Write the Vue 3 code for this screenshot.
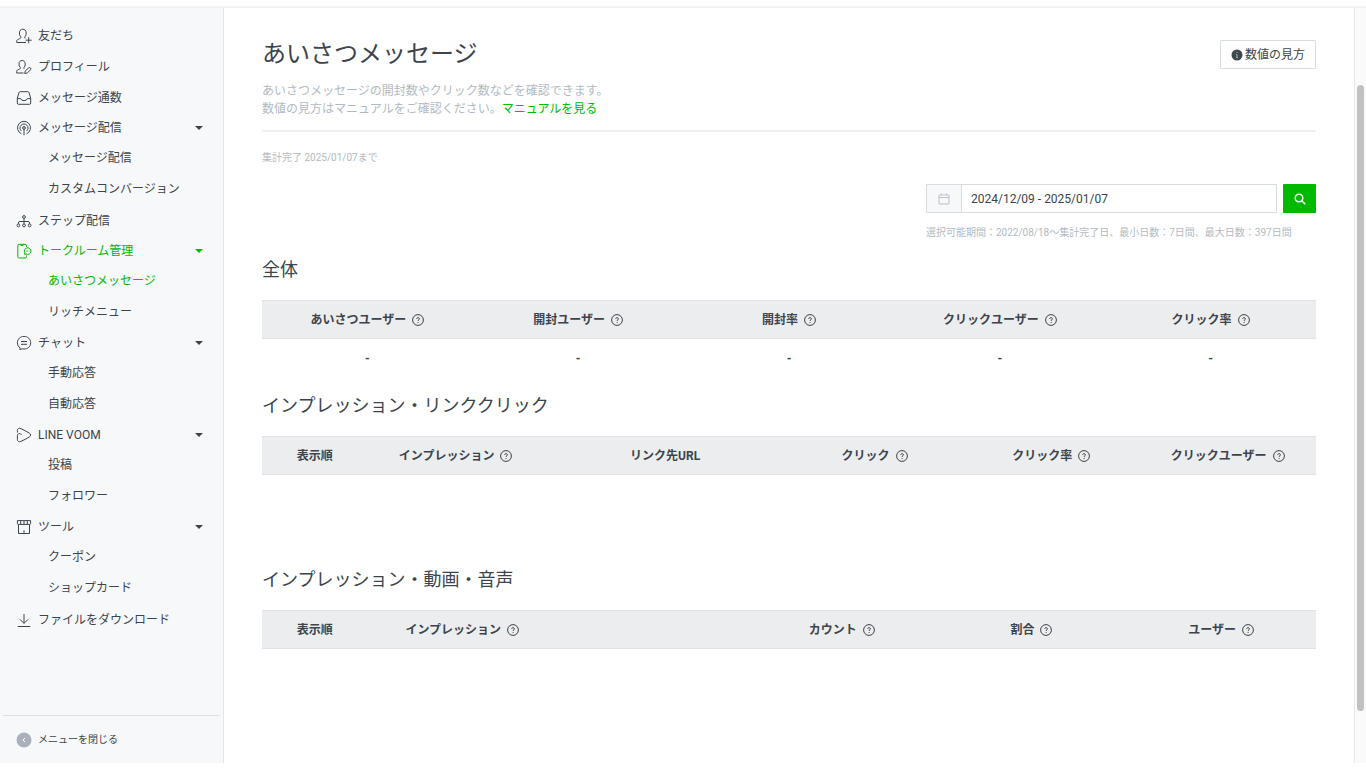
<script setup>
import { ref } from 'vue'

const menu = [
  { label: '友だち', icon: 'friends' },
  { label: 'プロフィール', icon: 'profile' },
  { label: 'メッセージ通数', icon: 'inbox' },
  { label: 'メッセージ配信', icon: 'broadcast', children: ['メッセージ配信', 'カスタムコンバージョン'] },
  { label: 'ステップ配信', icon: 'step' },
  { label: 'トークルーム管理', icon: 'room', active: true, children: ['あいさつメッセージ', 'リッチメニュー'] },
  { label: 'チャット', icon: 'chat', children: ['手動応答', '自動応答'] },
  { label: 'LINE VOOM', icon: 'voom', children: ['投稿', 'フォロワー'] },
  { label: 'ツール', icon: 'store', children: ['クーポン', 'ショップカード'] },
  { label: 'ファイルをダウンロード', icon: 'download' },
]
const current = 'あいさつメッセージ'

const icons = {
  friends: [
    'M10 14.5H.7v-1.2c0-1.4 1-1.9 3-2.6 1-.4 1.3-.8 1.2-1.6C3.800 7.900 3.400 6.600 3.400 5c0-2.400 1.400-3.800 3.400-3.800S10.200 2.600 10.200 5c0 1.600-.4 2.900-1.500 4.100-.1.700 0 1.100.6 1.400',
    'M12.700 9.200v6M9.700 12.200h6',
  ],
  profile: [
    'M7.500 14H.7v-1.400c0-1.300 1-1.800 2.600-2.400.9-.4 1.200-.8 1.100-1.500C3.400 7.600 3 6.500 3 5c0-2.200 1.200-3.500 3.100-3.500S9.200 2.800 9.200 5c0 1.500-.3 2.600-1.300 3.700-.1.600 0 1 .5 1.300',
    'M9.300 11.900l3.600-3.200c1-.8 2.700.9 1.800 1.900L11.200 14l-2.500.5z',
  ],
  inbox: [
    'M1.300 8.200L3 2.600q.3-.9 1.200-.9h7.600q.9 0 1.200.9l1.700 5.600v4.900q0 1.200-1.200 1.200h-11q-1.200 0-1.200-1.200z',
    'M1.300 8.600h3.400q.6 2.100 3.300 2.100t3.300-2.100h3.400',
  ],
  broadcast: [
    'M5.500 13.800a6.500 6.500 0 1 1 5 0',
    'M5.400 11a4 4 0 1 1 5.200 0',
    'M8 9.300a1.400 1.400 0 1 0 0-2.800 1.400 1.400 0 0 0 0 2.800v6M8 7.300v1',
  ],
  step: [
    'M8 5.400v5.600M2.400 11v-.9q0-1.600 1.600-1.600h8q1.600 0 1.600 1.600v.9',
    'M6.600 4a1.400 1.400 0 1 0 2.800 0 1.400 1.400 0 1 0-2.800 0M1 12.400a1.400 1.400 0 1 0 2.800 0 1.400 1.400 0 1 0-2.800 0M6.600 12.400a1.400 1.400 0 1 0 2.800 0 1.400 1.400 0 1 0-2.800 0M12.200 12.400a1.400 1.400 0 1 0 2.800 0 1.400 1.400 0 1 0-2.800 0',
  ],
  room: [
    'M10.500 4V2.800q0-1.500-1.500-1.500H3.300q-1.500 0-1.500 1.500v10.700q0 1.500 1.500 1.500H9q1.500 0 1.500-1.500v-1',
    'M4.500 1.500q.1 1.200 1.600 1.200t1.600-1.200',
    'M8.600 11.400l.3-1.400a3.300 3.300 0 1 1 1.300 1.100z',
    'M9.900 8.100h.7M11.300 8.100h.7M12.700 8.100h.7',
  ],
  chat: [
    'M3.900 14.700l.2-1.700A6.300 6.300 0 0 1 1.400 7.800C1.400 4 4.300 1.400 8 1.400S14.700 4 14.700 7.800 11.700 14 8 14q-1 0-1.900-.2z',
    'M5 6.500h6M5 9.300h6',
  ],
  voom: [
    'M1.400 5.600V3.600C1.400 1.500 3 .7 4.800 1.600c3 1.400 5.800 2.800 8.400 4.400 1.900 1.200 1.900 2.900 0 4.100-2.600 1.600-5.400 3-8.400 4.300-1.800.9-3.400.1-3.400-2V8.700c0-1.700 1.600-2.600 3-1.800l1.200.6',
  ],
  store: [
    'M1.400 1.600h13.200v2.900q0 .9-.9.900H2.300q-.9 0-.9-.9zM4.700 1.600v3.600M8 1.600v3.600M11.300 1.600v3.600',
    'M2.500 5.400v9.100h11V5.400M8 14.500v-3.200',
  ],
  download: ['M8 2v9.300M4 7.400l4 4 4-4', 'M1.700 14.500h12.600'],
}

const overall = ['あいさつユーザー', '開封ユーザー', '開封率', 'クリックユーザー', 'クリック率']
const linkColumns = [
  { label: '表示順', kind: 'order' },
  { label: 'インプレッション', help: true },
  { label: 'リンク先URL', kind: 'url' },
  { label: 'クリック', help: true },
  { label: 'クリック率', help: true },
  { label: 'クリックユーザー', help: true },
]
const mediaColumns = [
  { label: '表示順', kind: 'order' },
  { label: 'インプレッション', help: true },
  { label: '' },
  { label: 'カウント', help: true },
  { label: '割合', help: true },
  { label: 'ユーザー', help: true },
]
const sections = [
  { title: '全体', columns: overall.map((label) => ({ label, help: true })), values: overall.map(() => '-') },
  { title: 'インプレッション・リンククリック', columns: linkColumns },
  { title: 'インプレッション・動画・音声', columns: mediaColumns },
]
const period = ref('2024/12/09 - 2025/01/07')
</script>

<template>
  <div class="app">
    <div class="topbar"></div>
    <div class="body">
      <aside class="sidebar">
        <nav>
          <ul class="menu">
            <li v-for="item in menu" :key="item.label">
              <component
                :is="item.children ? 'button' : 'a'"
                :href="item.children ? undefined : '#'"
                :type="item.children ? 'button' : undefined"
                class="row"
                :class="{ parent: item.children, active: item.active }"
              >
                <svg class="icon" viewBox="0 0 16 16" aria-hidden="true">
                  <path v-for="d in icons[item.icon]" :key="d" :d="d" />
                </svg>
                <span>{{ item.label }}</span>
                <span v-if="item.children" class="caret"></span>
              </component>
              <ul v-if="item.children" class="submenu">
                <li v-for="child in item.children" :key="child">
                  <a href="#" class="subrow" :class="{ active: child === current }">{{ child }}</a>
                </li>
              </ul>
            </li>
          </ul>
        </nav>
        <button type="button" class="collapse">
          <svg class="icon" viewBox="0 0 16 16" aria-hidden="true">
            <circle cx="8" cy="8" r="7.500" class="disc" />
            <path d="M9 6L7 8l2 2" class="chevron" />
          </svg>
          <span>メニューを閉じる</span>
        </button>
      </aside>

      <main class="main">
        <header class="head">
          <div>
            <h1>{{ current }}</h1>
            <p class="lead">
              あいさつメッセージの開封数やクリック数などを確認できます。<br />数値の見方はマニュアルをご確認ください。<a href="#">マニュアルを見る</a>
            </p>
          </div>
          <button type="button" class="guide">
            <svg viewBox="0 0 12 12" aria-hidden="true">
              <circle cx="6" cy="6" r="5.500" fill="#3f474f" />
              <path d="M6 3v1M5.300 5.500H6V8.600M5.200 8.600h1.600" stroke="#aeb4ba" fill="none" />
            </svg>
            <span>数値の見方</span>
          </button>
        </header>

        <p class="note">集計完了 2025/01/07まで</p>

        <form class="search" @submit.prevent>
          <div class="fields">
            <label class="picker" for="period" aria-label="期間">
              <svg viewBox="0 0 12 12" aria-hidden="true">
                <path d="M1 2h10v9H1zM1 4.500h10M3.500.5V2M8.500.5V2" />
              </svg>
            </label>
            <input id="period" v-model="period" type="text" />
            <button type="submit" aria-label="検索">
              <svg viewBox="0 0 12 12" aria-hidden="true">
                <circle cx="5" cy="5" r="3.800" />
                <path d="M7.800 7.800l3.500 3.500" />
              </svg>
            </button>
          </div>
          <p class="note hint">選択可能期間：2022/08/18〜集計完了日、最小日数：7日間、最大日数：397日間</p>
        </form>

        <section v-for="section in sections" :key="section.title">
          <h2>{{ section.title }}</h2>
          <table>
            <thead>
              <tr>
                <th v-for="(col, i) in section.columns" :key="i" scope="col" :class="col.kind">
                  <span class="cell">
                    {{ col.label }}
                    <button v-if="col.help" type="button" class="help" :aria-label="col.label">
                      <svg viewBox="0 0 12 12" aria-hidden="true">
                        <circle cx="6" cy="6" r="5.400" />
                        <path d="M4.700 4.900c0-1.700 2.700-1.700 2.700-.1 0 1-1.300 1-1.300 2.100M6.100 8v.9" />
                      </svg>
                    </button>
                  </span>
                </th>
              </tr>
            </thead>
            <tbody>
              <tr v-if="section.values">
                <td v-for="(value, i) in section.values" :key="i">{{ value }}</td>
              </tr>
              <tr v-else>
                <td class="empty" :colspan="section.columns.length"></td>
              </tr>
            </tbody>
          </table>
        </section>
      </main>

      <div class="track"><div class="thumb"></div></div>
    </div>
  </div>
</template>

<style>
body {
  margin: 0;
  background: #fff;
}
</style>

<style scoped>
.app {
  box-sizing: border-box;
  min-height: 100vh;
  padding-bottom: 5px;
  display: flex;
  flex-direction: column;
  font-family: Roboto, "Noto Sans CJK JP", sans-serif;
  font-size: 12px;
  line-height: 18px;
  color: #3c444c;
}
h1, h2, p, ul {
  margin: 0;
  padding: 0;
}
ul {
  list-style: none;
}
a {
  color: inherit;
  text-decoration: none;
}
button {
  font: inherit;
  color: inherit;
  background: none;
  border: 0;
  padding: 0;
  cursor: pointer;
}
svg {
  display: block;
  flex: none;
}
.topbar {
  height: 6px;
  border-bottom: 2px solid #f1f2f3;
}
.body {
  flex: 1;
  display: flex;
}
.sidebar {
  width: 223px;
  flex: none;
  display: flex;
  flex-direction: column;
  justify-content: space-between;
  background: #f7f8fa;
  border-right: 1px solid #e4e6e9;
}
.menu {
  padding-top: 12px;
}
.row {
  box-sizing: border-box;
  width: 100%;
  height: 31px;
  padding: 0 20px 0 16px;
  display: flex;
  align-items: center;
  gap: 6px;
}
.row.parent {
  height: 30px;
}
.icon {
  width: 16px;
  height: 16px;
  fill: none;
  stroke: currentColor;
}
.caret {
  margin-left: auto;
  border: 4px solid transparent;
  border-top-color: currentColor;
  border-bottom: 0;
}
.subrow {
  display: block;
  padding-left: 48px;
  line-height: 31px;
}
.active {
  color: #00b900;
}
.collapse {
  margin: 0 3px;
  padding-left: 13px;
  height: 48px;
  display: flex;
  align-items: center;
  gap: 6px;
  border-top: 1px solid #dfe2e5;
  font-size: 10px;
}
.disc {
  fill: #a9b2bb;
  stroke: none;
}
.chevron {
  stroke: #fff;
}
.main {
  flex: 1;
  min-width: 0;
  padding: 25px 38px 0;
}
.head {
  display: flex;
  justify-content: space-between;
  align-items: flex-start;
  padding-bottom: 12px;
  border-bottom: 2px solid #f0f0f1;
}
h1 {
  font-size: 24px;
  line-height: 42px;
  font-weight: 400;
  margin-bottom: 7px;
}
.lead {
  color: #b2bac2;
}
.lead a {
  color: #00b900;
}
.guide {
  box-sizing: border-box;
  height: 29px;
  margin-top: 7px;
  padding: 0 10px;
  display: flex;
  align-items: center;
  gap: 2px;
  border: 1px solid #d8dde2;
  border-radius: 1px;
}
.guide svg {
  width: 12px;
  height: 12px;
}
.note {
  margin-top: 17px;
  font-size: 10px;
  color: #b2bac2;
}
.search {
  width: 390px;
  margin: 17px 0 0 auto;
}
.fields {
  display: flex;
  height: 29px;
}
.picker {
  width: 34px;
  display: flex;
  align-items: center;
  justify-content: center;
  background: #f7f8fa;
  border: 1px solid #d8dde2;
  border-right: 0;
}
.fields svg {
  width: 12px;
  height: 12px;
  fill: none;
  stroke: #b9c1c9;
}
.fields input {
  flex: 1;
  min-width: 0;
  box-sizing: border-box;
  padding: 0 9px;
  font: inherit;
  color: inherit;
  background: #fff;
  border: 1px solid #d8dde2;
}
.fields button {
  width: 33px;
  margin-left: 6px;
  display: flex;
  align-items: center;
  justify-content: center;
  background: #00b900;
  border-radius: 1px;
}
.fields button svg {
  stroke: #fff;
  stroke-width: 1.500;
}
.hint {
  margin-top: 11px;
  white-space: nowrap;
}
h2 {
  margin: 14px 0 16px;
  font-size: 18px;
  line-height: 28px;
  font-weight: 400;
}
table {
  width: 100%;
  table-layout: fixed;
  border-collapse: collapse;
}
th {
  height: 37px;
  padding: 0;
  background: #ecedef;
  border-top: 1px solid #e0e2e5;
  border-bottom: 1px solid #e0e2e5;
}
.order {
  width: 10%;
}
.url {
  width: 23%;
}
.cell {
  display: flex;
  align-items: center;
  justify-content: center;
  gap: 6px;
}
.help svg {
  width: 12px;
  height: 12px;
  fill: none;
  stroke: currentColor;
}
td {
  height: 39px;
  padding: 0;
  text-align: center;
  font-weight: 700;
}
.empty {
  height: 77px;
}
.track {
  flex: none;
  width: 11px;
  display: flex;
  background: #fafafa;
  border-left: 1px solid #e8e8e8;
}
.thumb {
  flex: 1;
  margin: 77px 2px 52px;
  border-radius: 4px;
  background: #c1c1c1;
}
</style>
